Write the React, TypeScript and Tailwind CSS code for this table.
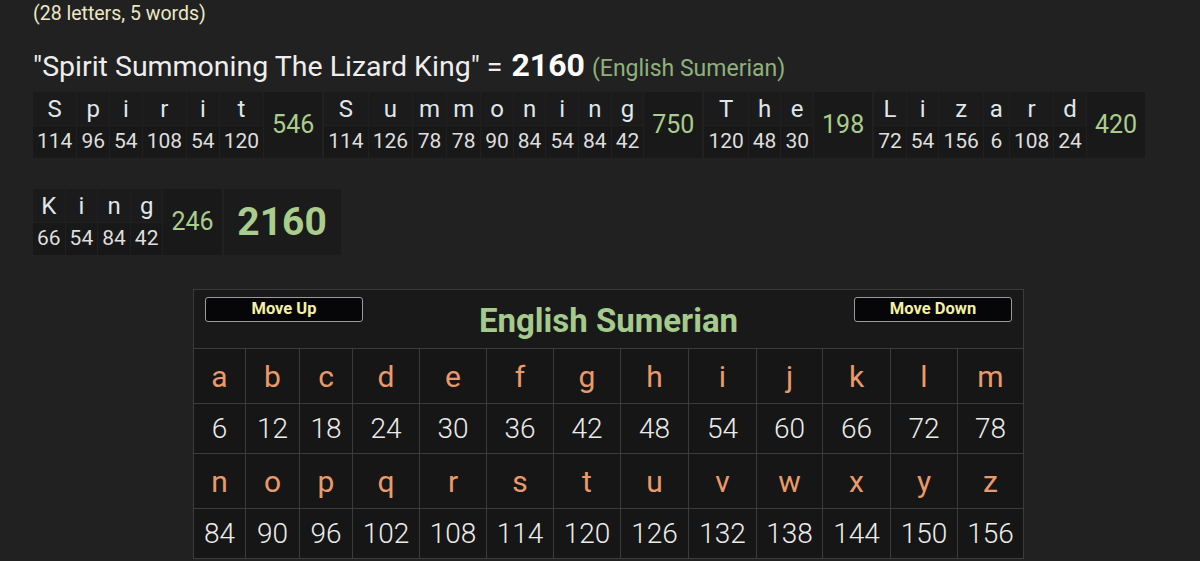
import React from "react";

type Word = { letters: [string, number][]; sum: number };

const words: Word[] = [
  { letters: [["S", 114], ["p", 96], ["i", 54], ["r", 108], ["i", 54], ["t", 120]], sum: 546 },
  {
    letters: [["S", 114], ["u", 126], ["m", 78], ["m", 78], ["o", 90], ["n", 84], ["i", 54], ["n", 84], ["g", 42]],
    sum: 750,
  },
  { letters: [["T", 120], ["h", 48], ["e", 30]], sum: 198 },
  { letters: [["L", 72], ["i", 54], ["z", 156], ["a", 6], ["r", 108], ["d", 24]], sum: 420 },
  { letters: [["K", 66], ["i", 54], ["n", 84], ["g", 42]], sum: 246 },
];

const alphabet = "abcdefghijklmnopqrstuvwxyz".split("");
const colWidths = [52, 54, 53, 67, 67, 67, 67, 68, 68, 66, 68, 67, 66];

const WordBlock: React.FC<{ word: Word }> = ({ word }) => (
  <div className="flex bg-[#202020] gap-px">
    {word.letters.map(([ch, val], i) => (
      <div key={i} className="flex flex-col gap-px">
        <div className="h-[33px] bg-[#1b1b1b] px-[6px] flex items-center justify-center text-[24px] text-[#dfe6ec]">
          {ch}
        </div>
        <div className="h-[32px] bg-[#181818] px-[4px] flex items-center justify-center text-[21px] text-[#dedede]">
          {val}
        </div>
      </div>
    ))}
    <div className="bg-[#191919] px-[8px] flex items-center justify-center text-[25px] text-[#a9cd8c]">
      {word.sum}
    </div>
  </div>
);

const MoveButton: React.FC<{ label: string }> = ({ label }) => (
  <button className="w-[158px] h-[25px] bg-[#060608] border border-[#9a9a9a] rounded-[3px] text-[16.5px] font-bold text-[#f4f0a4] leading-none">
    {label}
  </button>
);

const App: React.FC = () => {
  const rows = [alphabet.slice(0, 13), alphabet.slice(13)];
  return (
    <div
      className="w-[1200px] h-[561px] overflow-hidden bg-[#212121] pl-[33px] pr-[16px]"
      style={{ fontFamily: "Roboto, 'Liberation Sans', sans-serif" }}
    >
      <div className="pt-[1px] text-[19.5px] text-[#ece8c4] leading-[26px]">(28 letters, 5 words)</div>

      <div className="mt-[20px] flex items-baseline leading-[36px]">
        <span className="text-[28.5px] text-[#eeeeee]">"Spirit Summoning The Lizard King" =</span>
        <span className="ml-[9px] text-[32px] font-bold text-white">2160</span>
        <span className="ml-[7px] text-[23px] text-[#8fb27d]">(English Sumerian)</span>
      </div>

      <div className="mt-[5px] flex flex-wrap gap-x-[2px] gap-y-[31px]">
        {words.map((w, i) => (
          <WordBlock key={i} word={w} />
        ))}
        <div className="bg-[#1b1b1b] w-[117px] flex items-center justify-center text-[39px] font-bold text-[#a9cd8c]">
          2160
        </div>
      </div>

      <div className="mt-[34px] flex justify-center">
        <table className="border-collapse border border-[#3c3c3c] bg-[#161616]">
          <thead>
            <tr>
              <th colSpan={13} className="h-[59px] border border-[#3c3c3c] bg-[#191919] p-0">
                <div className="flex items-start justify-between px-[11px] pt-[7px] h-full">
                  <MoveButton label="Move Up" />
                  <span className="mt-[2px] text-[33px] font-bold text-[#a5ca8d] leading-[44px]">English Sumerian</span>
                  <MoveButton label="Move Down" />
                </div>
              </th>
            </tr>
          </thead>
          <tbody>
            {rows.map((row, r) => (
              <React.Fragment key={r}>
                <tr className="h-[55px]">
                  {row.map((ch, i) => (
                    <td
                      key={ch}
                      style={{ width: colWidths[i] }}
                      className="border border-[#3c3c3c] text-center text-[30px] text-[#e99a6c] p-0"
                    >
                      {ch}
                    </td>
                  ))}
                </tr>
                <tr className="h-[50px]">
                  {row.map((ch) => (
                    <td
                      key={ch}
                      className="border border-[#3c3c3c] text-center text-[28px] font-light text-[#ececec] p-0"
                    >
                      {(alphabet.indexOf(ch) + 1) * 6}
                    </td>
                  ))}
                </tr>
              </React.Fragment>
            ))}
          </tbody>
        </table>
      </div>
    </div>
  );
};

export default App;
